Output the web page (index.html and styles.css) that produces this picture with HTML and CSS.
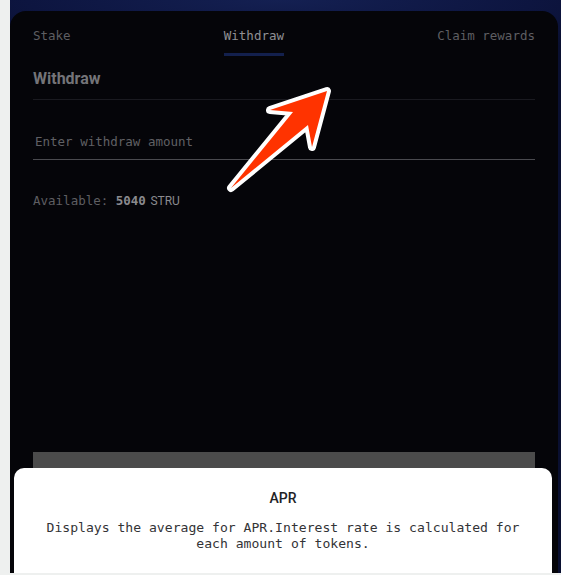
FILE: index.html
```html
<!DOCTYPE html>
<html>
<head>
<meta charset="utf-8">
<link rel="stylesheet" href="styles.css">
</head>
<body>
<div class="frame">
  <div class="card">
    <nav class="tabs">
      <span class="tab">Stake</span>
      <span class="tab active">Withdraw</span>
      <span class="tab">Claim rewards</span>
    </nav>
    <h2 class="heading">Withdraw</h2>
    <input class="amount" type="text" placeholder="Enter withdraw amount">
    <p class="available">Available: <b class="num">5040</b> <span class="unit">STRU</span></p>
    <div class="button"></div>
  </div>
</div>
<div class="modal">
  <h3 class="modal-title">APR</h3>
  <p class="modal-text">Displays the average for APR.Interest rate is calculated for each amount of tokens.</p>
</div>
<svg class="arrow" width="561" height="575" viewBox="0 0 561 575">
  <polygon points="327,91 312,147 308,125 231,188 293,112 270,110" fill="#ff3300" stroke="#ffffff" stroke-width="8" stroke-linejoin="round" paint-order="stroke"/>
</svg>
</body>
</html>
```

FILE: styles.css
```css
html, body {
  margin: 0;
  padding: 0;
}
body {
  background: #eef0ef;
  width: 561px;
  height: 575px;
  overflow: hidden;
  position: relative;
}
.frame {
  margin-left: 10px;
  height: 573px;
  background: radial-gradient(ellipse 420px 60px at 270px 0px, #142052 0%, #0d1540 60%, #090f30 100%);
  display: flex;
  flex-direction: column;
}
.card {
  margin: 11px 3px 0 0;
  flex: 1;
  background: #050509;
  border-radius: 16px 16px 0 0;
  padding: 0 23px;
  display: flex;
  flex-direction: column;
}
.tabs {
  display: flex;
  justify-content: space-between;
  align-items: flex-start;
}
.tab {
  font-family: "DejaVu Sans Mono", monospace;
  font-size: 12.5px;
  line-height: 16px;
  color: #5e5e62;
  padding: 17px 0 9px;
  border-bottom: 3px solid transparent;
}
.tab.active {
  color: #909094;
  border-bottom-color: #13204d;
}
.heading {
  margin: 13px 0 0;
  font-family: Roboto, "Liberation Sans", sans-serif;
  font-weight: 700;
  font-size: 16px;
  line-height: 20px;
  color: #747478;
  padding-bottom: 10px;
  border-bottom: 1px solid #1a1a20;
}
.amount {
  margin-top: 33px;
  display: block;
  width: 100%;
  box-sizing: border-box;
  background: transparent;
  border: none;
  border-bottom: 1px solid #4a4a4f;
  padding: 0 0 10px 2px;
  font-family: "DejaVu Sans Mono", monospace;
  font-size: 12.5px;
  line-height: 16px;
  height: 27px;
  color: #8c8c90;
  outline: none;
}
.amount::placeholder {
  color: #606064;
}
.available {
  margin: 33px 0 0;
  font-family: "DejaVu Sans Mono", monospace;
  font-size: 12.5px;
  line-height: 16px;
  color: #5e5e62;
}
.num {
  color: #8a8a8e;
  font-weight: 700;
}
.unit {
  font-family: Roboto, "Liberation Sans", sans-serif;
  font-size: 12px;
  color: #8a8a8e;
  margin-left: -3px;
}
.button {
  margin-top: 243px;
  height: 60px;
  background: #4b4b4b;
}
.modal {
  position: absolute;
  left: 14px;
  right: 9px;
  top: 468px;
  height: 105px;
  background: #ffffff;
  border-radius: 10px 10px 0 0;
  padding: 21px 20px 0;
  box-sizing: border-box;
  text-align: center;
}
.modal-title {
  margin: 0;
  font-family: Roboto, "Liberation Sans", sans-serif;
  font-weight: 500;
  font-size: 14px;
  line-height: 18px;
  color: #222226;
}
.modal-text {
  margin: 13px 0 0;
  font-family: "DejaVu Sans Mono", monospace;
  font-size: 13.1px;
  line-height: 16px;
  color: #333336;
}
.arrow {
  position: absolute;
  left: 0;
  top: 0;
  pointer-events: none;
}
```
